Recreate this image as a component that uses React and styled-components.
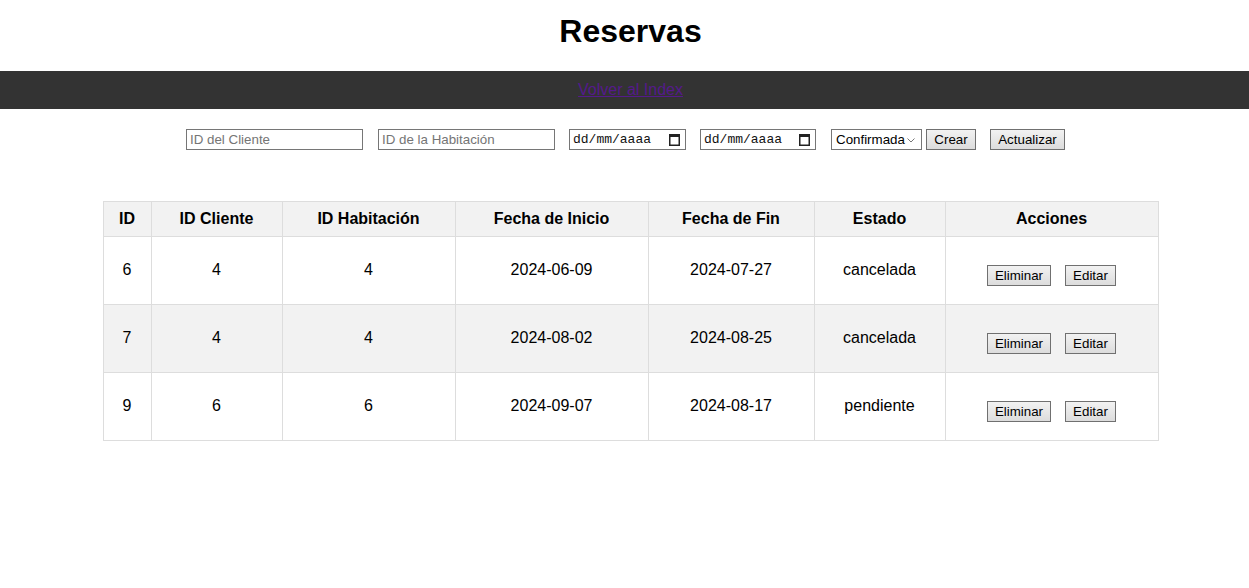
import React from "react";
import styled, { createGlobalStyle } from "styled-components";

const Global = createGlobalStyle`
  html, body { margin: 0; padding: 0; background: #fff; }
  body { font-family: "Liberation Sans", Arial, sans-serif; color: #000; }
`;

const Header = styled.header`
  padding: 13px 0 0 12px;
  height: 71px;
  box-sizing: border-box;
  text-align: center;
`;

const Title = styled.h1`
  margin: 0;
  font-size: 32px;
  font-weight: bold;
  line-height: 37px;
`;

const Nav = styled.nav`
  background: #333;
  height: 38px;
  box-sizing: border-box;
  padding: 10px 0 0 12px;
  text-align: center;
  font-size: 16px;
  line-height: 18px;
`;

const NavLink = styled.a`
  color: #551a8b;
  text-decoration: underline;
`;

const Form = styled.form`
  display: flex;
  justify-content: center;
  align-items: center;
  margin: 20px 0 0;
  padding-left: 2px;
`;

const TextInput = styled.input`
  box-sizing: border-box;
  width: 177px;
  height: 21px;
  margin: 0 ${(p) => p.$gap}px 0 0;
  padding: 1px 3px;
  border: 1px solid #767676;
  border-radius: 0;
  font-family: "Liberation Sans", Arial, sans-serif;
  font-size: 13.33px;
  outline: none;
  &::placeholder { color: #757575; }
`;

const DateField = styled.div`
  box-sizing: border-box;
  width: ${(p) => p.$w}px;
  height: 21px;
  margin-right: ${(p) => p.$gap}px;
  border: 1px solid #767676;
  display: flex;
  align-items: center;
  justify-content: space-between;
  padding: 0 5px 0 3px;
  font-family: "Liberation Mono", monospace;
  font-size: 13px;
  color: #111;
`;

const SelectWrap = styled.div`
  position: relative;
  width: 91px;
  height: 21px;
  margin-right: 4px;
`;

const Select = styled.select`
  appearance: none;
  -webkit-appearance: none;
  box-sizing: border-box;
  width: 100%;
  height: 100%;
  margin: 0;
  border: 1px solid #767676;
  border-radius: 0;
  background: #fff;
  font-family: "Liberation Sans", Arial, sans-serif;
  font-size: 13.33px;
  color: #000;
  padding: 0 0 0 4px;
  outline: none;
`;

const Chevron = styled.svg`
  position: absolute;
  right: 7px;
  top: 9px;
  pointer-events: none;
`;

const Button = styled.button`
  box-sizing: border-box;
  width: ${(p) => p.$w}px;
  height: 21px;
  margin: 0 ${(p) => p.$gap || 0}px 0 0;
  padding: 0;
  border: 1px solid #707070;
  border-radius: 0;
  background: linear-gradient(#f2f2f2, #dcdcdc);
  font-family: "Liberation Sans", Arial, sans-serif;
  font-size: 13.33px;
  color: #000;
  cursor: pointer;
`;

const TableWrap = styled.div`
  display: flex;
  justify-content: center;
  padding-left: 12px;
  margin-top: 51px;
`;

const Table = styled.table`
  width: 1055px;
  border-collapse: collapse;
  table-layout: fixed;
  font-size: 16px;
`;

const Th = styled.th`
  border: 1px solid #ddd;
  background: #f2f2f2;
  padding: 8px;
  line-height: 18px;
  text-align: center;
  font-weight: bold;
`;

const Row = styled.tr`
  background: ${(p) => (p.$alt ? "#f2f2f2" : "#fff")};
`;

const Td = styled.td`
  border: 1px solid #ddd;
  padding: 7px 8px 9px;
  line-height: 18px;
  text-align: center;
  vertical-align: middle;
`;

const Actions = styled.div`
  display: flex;
  justify-content: center;
  gap: 14px;
  padding: 21px 0 9px;
`;

const CalIcon = () => (
  <svg width="11" height="13" viewBox="0 0 11 13">
    <rect x="0.75" y="1.75" width="9.5" height="10.5" fill="none" stroke="#222" strokeWidth="1.5" />
    <rect x="0" y="1" width="11" height="3" fill="#222" />
  </svg>
);

const cols = [48, 131, 173, 193, 166, 131, 213];

const rows = [
  { id: 6, c: 4, h: 4, ini: "2024-06-09", fin: "2024-07-27", est: "cancelada" },
  { id: 7, c: 4, h: 4, ini: "2024-08-02", fin: "2024-08-25", est: "cancelada" },
  { id: 9, c: 6, h: 6, ini: "2024-09-07", fin: "2024-08-17", est: "pendiente" },
];

export default function App() {
  return (
    <>
      <Global />
      <Header>
        <Title>Reservas</Title>
      </Header>
      <Nav>
        <NavLink href="#">Volver al Index</NavLink>
      </Nav>
      <Form onSubmit={(e) => e.preventDefault()}>
        <TextInput $gap={15} placeholder="ID del Cliente" />
        <TextInput $gap={14} placeholder="ID de la Habitación" />
        <DateField $w={117} $gap={14}>
          <span>dd/mm/aaaa</span>
          <CalIcon />
        </DateField>
        <DateField $w={116} $gap={15}>
          <span>dd/mm/aaaa</span>
          <CalIcon />
        </DateField>
        <SelectWrap>
          <Select defaultValue="confirmada">
            <option value="confirmada">Confirmada</option>
            <option value="pendiente">Pendiente</option>
            <option value="cancelada">Cancelada</option>
          </Select>
          <Chevron width="8" height="5" viewBox="0 0 8 5">
            <path d="M0.5 0.5 L4 4 L7.5 0.5" fill="none" stroke="#777" strokeWidth="1" />
          </Chevron>
        </SelectWrap>
        <Button $w={50} $gap={14} type="submit">Crear</Button>
        <Button $w={75} type="button">Actualizar</Button>
      </Form>
      <TableWrap>
        <Table>
          <colgroup>
            {cols.map((w, i) => (
              <col key={i} style={{ width: w }} />
            ))}
          </colgroup>
          <thead>
            <tr>
              <Th>ID</Th>
              <Th>ID Cliente</Th>
              <Th>ID Habitación</Th>
              <Th>Fecha de Inicio</Th>
              <Th>Fecha de Fin</Th>
              <Th>Estado</Th>
              <Th>Acciones</Th>
            </tr>
          </thead>
          <tbody>
            {rows.map((r, i) => (
              <Row key={r.id} $alt={i % 2 === 1}>
                <Td>{r.id}</Td>
                <Td>{r.c}</Td>
                <Td>{r.h}</Td>
                <Td>{r.ini}</Td>
                <Td>{r.fin}</Td>
                <Td>{r.est}</Td>
                <Td>
                  <Actions>
                    <Button $w={64} type="button">Eliminar</Button>
                    <Button $w={51} type="button">Editar</Button>
                  </Actions>
                </Td>
              </Row>
            ))}
          </tbody>
        </Table>
      </TableWrap>
    </>
  );
}
